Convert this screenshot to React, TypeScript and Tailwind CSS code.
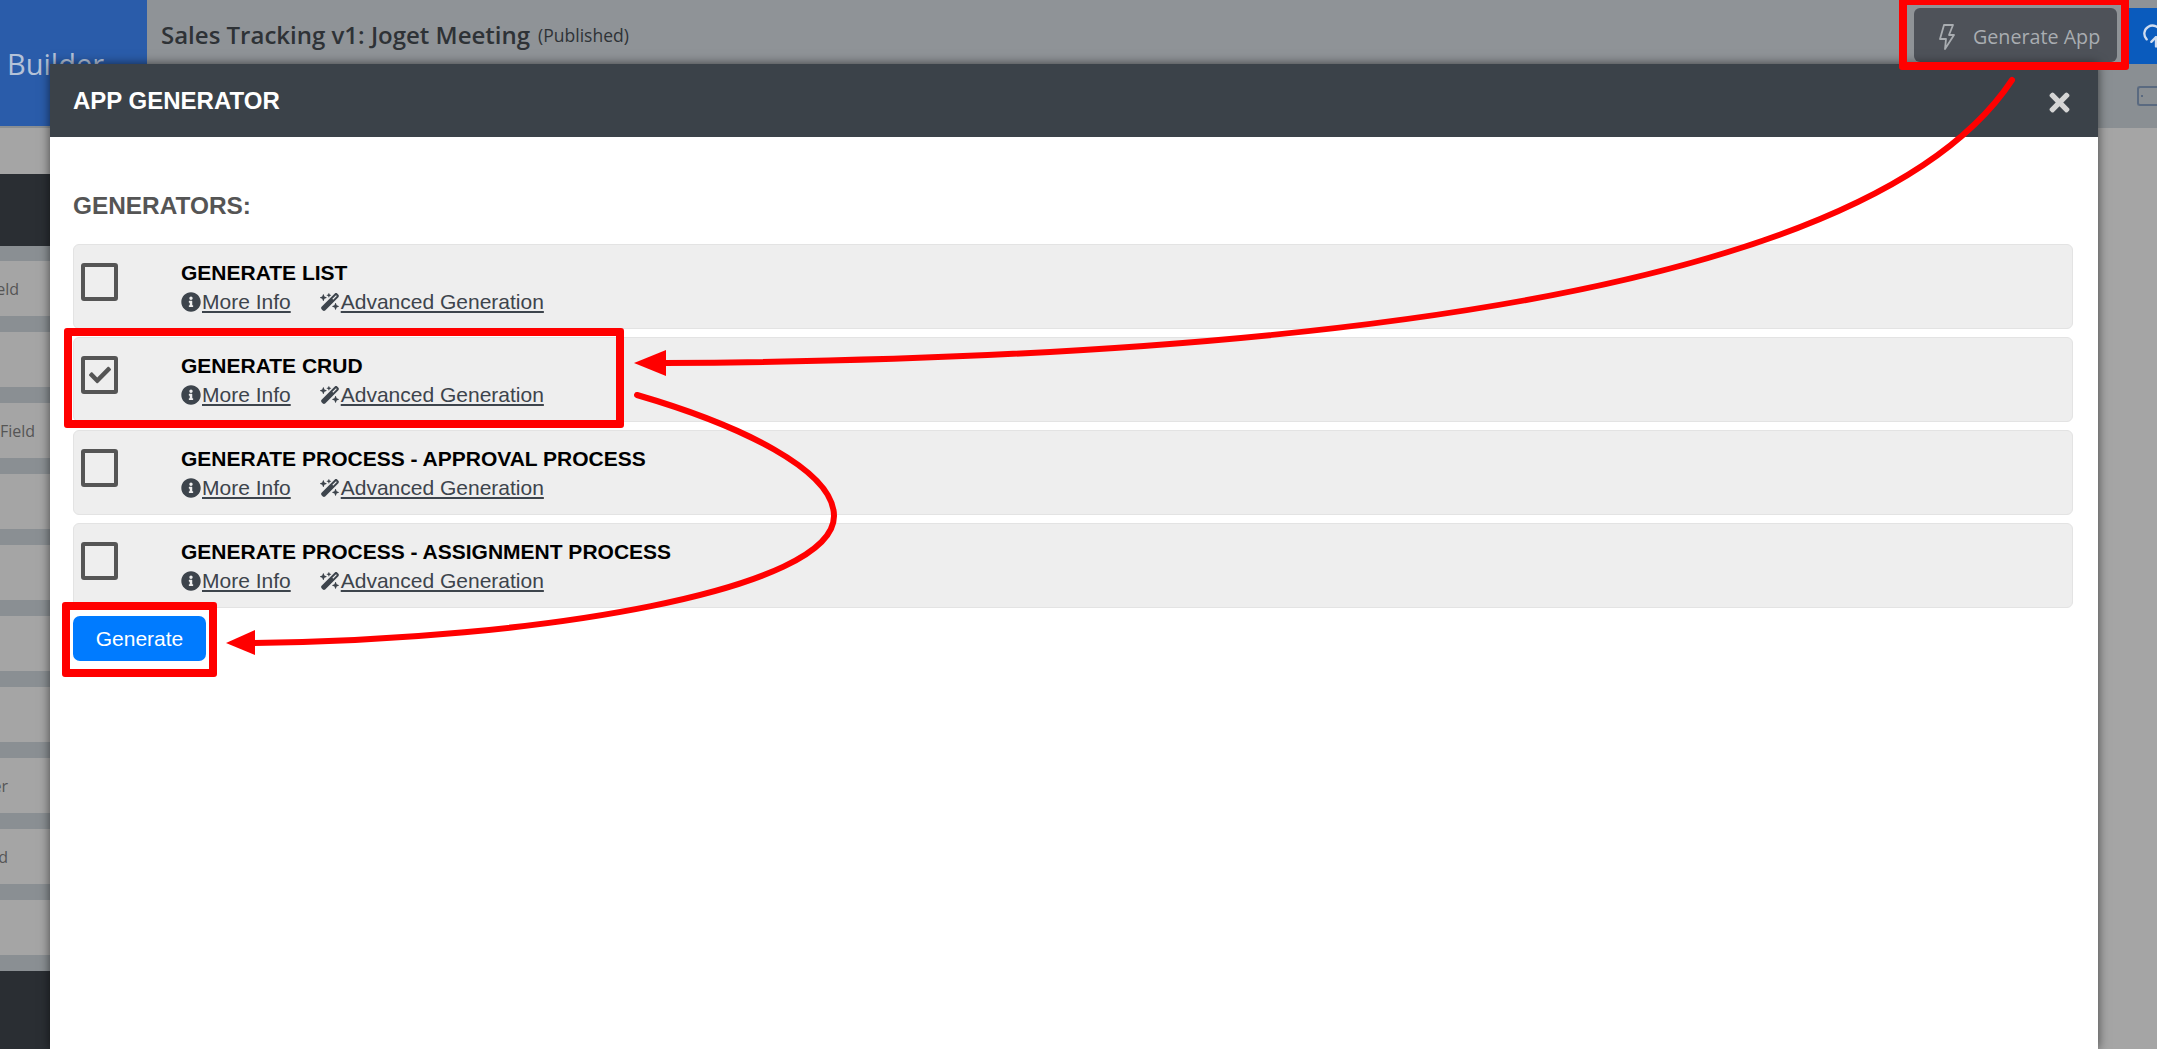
import { CloudUpload } from 'lucide-react'
import { FaInfoCircle, FaTimes, FaCheck } from 'react-icons/fa'
import { FaWandMagicSparkles } from 'react-icons/fa6'

const sideRows = [
  { label: 'Text Field', pad: 'pr-[128px]' },
  { label: '', pad: '' },
  { label: 'Hidden Field', pad: 'pr-[112px]' },
  { label: '', pad: '' },
  { label: '', pad: '' },
  { label: '', pad: '' },
  { label: '', pad: '' },
  { label: 'Spacer', pad: 'pr-[139px]' },
  { label: 'Upload', pad: 'pr-[139px]' },
  { label: '', pad: '' },
]

const generators = [
  { title: 'GENERATE LIST', checked: false },
  { title: 'GENERATE CRUD', checked: true },
  { title: 'GENERATE PROCESS - APPROVAL PROCESS', checked: false },
  { title: 'GENERATE PROCESS - ASSIGNMENT PROCESS', checked: false },
]

function GeneratorRow({ title, checked }: { title: string; checked: boolean }) {
  return (
    <div className="flex h-[85px] rounded-md border border-[#e3e3e3] bg-[#eeeeee] pl-[7px]">
      <div className="mt-[18px] flex h-[38px] w-[37px] items-center justify-center rounded-[3px] border-4 border-[#555555] text-[#555555]">
        {checked && <FaCheck size={22} />}
      </div>
      <div className="ml-[63px] pt-[13px]">
        <div className="text-[21px] leading-[30px] font-bold text-black">{title}</div>
        <div className="flex h-[28px] items-center text-[21px] text-[#3d444c]">
          <FaInfoCircle size={20} className="mr-px" />
          <span className="underline decoration-2 underline-offset-2">More Info</span>
          <FaWandMagicSparkles size={20} className="ml-[29px] mr-px" />
          <span className="underline decoration-2 underline-offset-2">Advanced Generation</span>
        </div>
      </div>
    </div>
  )
}

export default function App() {
  return (
    <div className="relative flex h-[1049px] w-[2157px] overflow-hidden bg-[#a5a5a5] [font-family:'Open_Sans',sans-serif]">
      <aside className="flex w-[147px] shrink-0 flex-col bg-[#8a8f93]">
        <div className="h-[126px] bg-[#2a5caa] pl-[7px] pt-[44px] text-[29px] leading-[40px] text-[#b4c2d8]">Builder</div>
        <div className="h-[2px] bg-[#8a8f93]" />
        <div className="h-[46px] bg-[#a5a5a5]" />
        <div className="h-[72px] bg-[#2a2e33]" />
        <div className="flex flex-1 flex-col gap-4 pt-[15px]">
          {sideRows.map((row, i) => (
            <div
              key={i}
              className={`flex h-[55px] items-center justify-end overflow-hidden whitespace-nowrap bg-[#a5a5a5] text-base text-[#555555] ${row.pad}`}
            >
              {row.label}
            </div>
          ))}
        </div>
        <div className="h-[78px] bg-[#2a2e33]" />
      </aside>

      <div className="flex flex-1 flex-col">
        <header className="flex h-16 items-start bg-[#8f9397]">
          <div className="flex h-16 items-center pl-[14px] pt-[6px] text-[#2e3236]">
            <span className="text-[24px] font-semibold">Sales Tracking v1: Joget Meeting</span>
            <span className="ml-[8px] text-[17.5px]">(Published)</span>
          </div>
          <div className="ml-auto mt-2 flex h-[54px] w-[203px] items-center rounded-md bg-[#4e5259] text-[#a9adb1]">
            <svg viewBox="0 0 16 26" className="ml-[25px] mt-[3px] h-[26px] w-4" fill="none" stroke="currentColor" strokeWidth="1.8" strokeLinejoin="round">
              <path d="M5 1h9l-4 10h5L6 25l1-10H1z" />
            </svg>
            <span className="ml-[18px] whitespace-nowrap pt-[4px] text-[19.7px]">Generate App</span>
          </div>
          <div className="ml-[4px] mt-2 flex h-14 w-9 items-center overflow-hidden bg-[#0a5bbd] pl-[21px] text-[#cfdcef]">
            <CloudUpload size={28} className="shrink-0" />
          </div>
        </header>
        <div className="flex h-16 items-center justify-end overflow-hidden bg-[#8a8f93]">
          <div className="flex h-5 w-5 items-center rounded-l-[3px] border-y-2 border-l-2 border-[#5a6a80] pl-[2px]">
            <span className="h-[2px] w-[2px] bg-[#5a6a80]" />
          </div>
        </div>
      </div>

      {/* modal */}
      <div className="absolute left-[50px] top-16 h-[985px] w-[2048px] bg-white shadow-[0_0_10px_rgba(0,0,0,0.6)] [font-family:'Liberation_Sans',Arial,sans-serif]">
        <div className="flex h-[73px] items-center justify-between bg-[#3b4249] pl-[23px] pr-[24px]">
          <h2 className="text-[24px] font-bold text-white">APP GENERATOR</h2>
          <FaTimes size={29} className="mt-1 text-[#d5d5d5]" />
        </div>
        <div className="pl-[23px] pr-[25px]">
          <h3 className="mt-[55px] mb-[25px] text-[24.4px] leading-[27px] font-bold text-[#555555]">GENERATORS:</h3>
          <div className="flex flex-col gap-2">
            {generators.map((g) => (
              <GeneratorRow key={g.title} title={g.title} checked={g.checked} />
            ))}
          </div>
          <button className="mt-2 h-[45px] w-[133px] rounded-[7px] bg-[#007bff] text-[21px] text-white">Generate</button>
        </div>
      </div>

      {/* red annotations */}
      <div className="absolute left-[1899px] top-[-3px] h-[73px] w-[230px] rounded-[3px] border-8 border-[#ff0000]" />
      <div className="absolute left-[64px] top-[328px] h-[100px] w-[560px] rounded-[3px] border-8 border-[#ff0000]" />
      <div className="absolute left-[62px] top-[602px] h-[75px] w-[155px] rounded-[3px] border-8 border-[#ff0000]" />
      <svg className="absolute left-0 top-0" width="2157" height="1049" viewBox="0 0 2157 1049" fill="none">
        <path d="M2012 80 C1900 250 1500 358 664 363" stroke="#ff0000" strokeWidth="6" strokeLinecap="round" />
        <path d="M634 363 L666 350 L666 376 Z" fill="#ff0000" />
        <path d="M637 395 C740 425 834 470 834 516 C834 590 540 640 252 643" stroke="#ff0000" strokeWidth="6" strokeLinecap="round" />
        <path d="M226 643 L255 630 L255 655 Z" fill="#ff0000" />
      </svg>
    </div>
  )
}
